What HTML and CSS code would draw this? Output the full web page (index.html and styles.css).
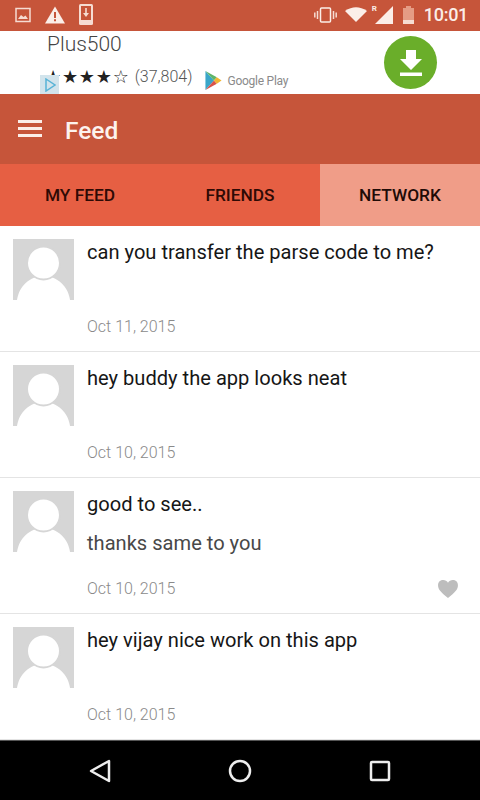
FILE: index.html
```html
<!DOCTYPE html>
<html lang="en">
<head>
    <meta charset="UTF-8">
    <title>Feed</title>
    <link rel="stylesheet" href="styles.css">
</head>
<body>

<div class="statusbar">
    <div class="status-left">
        <svg width="16" height="16" viewBox="0 0 16 16"><path d="M1 1.500h14v13H1z" fill="none" stroke="#f6dcd2" stroke-width="1.500"/><path d="M3 12l3-4 2.500 2 2-1.500 2.500 3.500z" fill="#f6dcd2"/></svg>
        <svg width="20" height="18" viewBox="0 0 20 18"><path d="M10 0.500L20 17.500H0z" fill="#fbeee8"/><path d="M9 6h2v6H9zM9 13.200h2v2H9z" fill="#c6553a"/></svg>
        <svg width="14" height="21" viewBox="0 0 14 21"><rect width="14" height="21" rx="1.500" fill="#f6dcd2"/><rect x="2" y="2" width="10" height="14" fill="#c6553a"/><path d="M6.200 4h1.600v5h2.200L7 13 4 9h2.200z" fill="#f6dcd2"/></svg>
    </div>
    <div class="status-right">
        <svg width="23" height="16" viewBox="0 0 23 16"><rect x="6.500" y="1" width="10" height="14" rx="1" fill="none" stroke="#fbeee8" stroke-width="1.500"/><path d="M3.500 4v8M0.800 5.500v5M19.500 4v8M22.200 5.500v5" stroke="#f6dcd2" stroke-width="1.500"/></svg>
        <svg class="wifi" width="22" height="15" viewBox="0 0 22 15"><path d="M0 4Q11-3.500 22 4L11 15z" fill="#fbeee8"/></svg>
        <div class="signal">
            <span class="roaming">R</span>
            <svg width="18" height="18" viewBox="0 0 18 18"><path d="M18 0v18H0z" fill="#fbeee8"/></svg>
        </div>
        <svg class="battery" width="11" height="18" viewBox="0 0 11 18"><path d="M3 0h5v2h3v16H0V2h3z" fill="#e59c85"/><path d="M0 14h11v4H0z" fill="#f6dcd2"/></svg>
        <span class="clock">10:01</span>
    </div>
</div>

<div class="ad">
    <div class="ad-info">
        <div class="ad-title">Plus500</div>
        <div class="ad-meta">
            <span class="stars">★★★★☆</span>
            <span class="ad-count">(37,804)</span>
            <svg class="play" width="17" height="19" viewBox="0 0 17 20"><path d="M0 0l9 10-9 10z" fill="#3aa6c9"/><path d="M0 0l12 6.500-3 3.500z" fill="#5fb56a"/><path d="M0 20l12-6.500-3-3.500z" fill="#d9534a"/><path d="M12 6.500l5 3.500-5 3.500-3-3.500z" fill="#f2b632"/></svg>
            <span class="store">Google Play</span>
        </div>
    </div>
    <div class="ad-badge">
        <svg width="12" height="14" viewBox="0 0 12 14"><path d="M2 1l9 6-9 6z" fill="none" stroke="#58b3d6" stroke-width="1.500"/></svg>
    </div>
    <div class="ad-button">
        <svg width="22" height="26" viewBox="0 0 22 26"><path d="M6 0h10v9h6L11 20 0 9h6z" fill="#fff"/><path d="M0 22.500h22v3.500H0z" fill="#fff"/></svg>
    </div>
</div>

<div class="toolbar">
    <div class="menu-icon"><span></span><span></span><span></span></div>
    <h1>Feed</h1>
</div>

<div class="tabs">
    <div class="tab">MY FEED</div>
    <div class="tab">FRIENDS</div>
    <div class="tab active">NETWORK</div>
</div>

<div class="feed">
    <div class="post">
        <svg class="avatar" viewBox="0 0 61 61"><rect width="61" height="61" fill="#d6d6d6"/><path d="M4 61C6 47 17 37 30.500 37S55 47 57 61z" fill="#fff"/><circle cx="30.500" cy="24" r="16.500" fill="#fff" stroke="#d6d6d6" stroke-width="2"/></svg>
        <div class="post-body">
            <p class="msg">can you transfer the parse code to me?</p>
            <div class="date">Oct 11, 2015</div>
        </div>
    </div>
    <div class="post">
        <svg class="avatar" viewBox="0 0 61 61"><rect width="61" height="61" fill="#d6d6d6"/><path d="M4 61C6 47 17 37 30.500 37S55 47 57 61z" fill="#fff"/><circle cx="30.500" cy="24" r="16.500" fill="#fff" stroke="#d6d6d6" stroke-width="2"/></svg>
        <div class="post-body">
            <p class="msg">hey buddy the app looks neat</p>
            <div class="date">Oct 10, 2015</div>
        </div>
    </div>
    <div class="post post-reply">
        <svg class="avatar" viewBox="0 0 61 61"><rect width="61" height="61" fill="#d6d6d6"/><path d="M4 61C6 47 17 37 30.500 37S55 47 57 61z" fill="#fff"/><circle cx="30.500" cy="24" r="16.500" fill="#fff" stroke="#d6d6d6" stroke-width="2"/></svg>
        <div class="post-body">
            <p class="msg">good to see..</p>
            <p class="reply">thanks same to you</p>
            <div class="date">Oct 10, 2015</div>
        </div>
        <svg class="heart" width="20" height="18" viewBox="0 0 21 19"><path d="M10.500 19C3 13 0 10 0 5.500 0 2 2.500 0 5.500 0 7.500 0 9.500 1 10.500 3 11.500 1 13.500 0 15.500 0 18.500 0 21 2 21 5.500 21 10 18 13 10.500 19z" fill="#bdbdbd"/></svg>
    </div>
    <div class="post">
        <svg class="avatar" viewBox="0 0 61 61"><rect width="61" height="61" fill="#d6d6d6"/><path d="M4 61C6 47 17 37 30.500 37S55 47 57 61z" fill="#fff"/><circle cx="30.500" cy="24" r="16.500" fill="#fff" stroke="#d6d6d6" stroke-width="2"/></svg>
        <div class="post-body">
            <p class="msg">hey vijay nice work on this app</p>
            <div class="date">Oct 10, 2015</div>
        </div>
    </div>
</div>

<div class="navbar">
    <svg width="22" height="24" viewBox="0 0 22 24"><path d="M20 2v20L2 12z" fill="none" stroke="#eee" stroke-width="2.500" stroke-linejoin="round"/></svg>
    <svg width="24" height="24" viewBox="0 0 24 24"><circle cx="12" cy="12" r="10" fill="none" stroke="#eee" stroke-width="2.500"/></svg>
    <svg width="22" height="22" viewBox="0 0 22 22"><rect x="2" y="2" width="18" height="18" rx="1" fill="none" stroke="#eee" stroke-width="2.500"/></svg>
</div>

</body>
</html>
```

FILE: styles.css
```css
* {
    box-sizing: border-box;
}

body {
    margin: 0;
    width: 480px;
    height: 800px;
    overflow: hidden;
    display: flex;
    flex-direction: column;
    font-family: 'Roboto', sans-serif;
    background-color: #fff;
}

.statusbar {
    height: 31px;
    flex: none;
    display: flex;
    justify-content: space-between;
    align-items: center;
    padding: 0 12px 2px 15px;
    background-color: #c6553a;
}

.status-left {
    display: flex;
    align-items: center;
    gap: 14px;
}

.status-right {
    display: flex;
    align-items: center;
}

.wifi {
    margin-left: 8px;
}

.signal {
    display: flex;
    align-items: flex-end;
    position: relative;
    margin-left: 8px;
}

.roaming {
    position: absolute;
    left: -3px;
    top: -2px;
    font-size: 8px;
    font-weight: 700;
    color: #fbeee8;
}

.battery {
    margin-left: 10px;
}

.clock {
    margin-left: 10px;
    font-size: 18px;
    font-weight: 500;
    letter-spacing: -0.300px;
    color: #fbeee8;
}

.ad {
    height: 63px;
    flex: none;
    display: flex;
    justify-content: space-between;
    padding: 0 43px 0 47px;
    position: relative;
    background-color: #fff;
}

.ad-title {
    font-size: 21px;
    font-weight: 300;
    line-height: 26px;
    color: #444;
}

.ad-meta {
    display: flex;
    align-items: center;
    margin-top: 6px;
    color: #777;
}

.stars {
    font-size: 18px;
    line-height: 20px;
    letter-spacing: 0.800px;
    margin-left: -2px;
    color: #222;
    font-family: 'DejaVu Sans', sans-serif;
}

.ad-count {
    margin-left: 5px;
    font-size: 16px;
    font-weight: 300;
    color: #555;
}

.play {
    margin: 8px 0 0 13px;
}

.store {
    margin: 8px 0 0 5px;
    font-size: 12px;
    letter-spacing: -0.250px;
    color: #8a8a8a;
}

.ad-badge {
    position: absolute;
    left: 40px;
    bottom: 0;
    width: 19px;
    height: 19px;
    display: flex;
    align-items: center;
    justify-content: center;
    background-color: #d2e4ec;
}

.ad-button {
    width: 53px;
    height: 53px;
    margin-top: 5px;
    display: flex;
    align-items: center;
    justify-content: center;
    border-radius: 50%;
    background-color: #6aae2a;
}

.toolbar {
    height: 70px;
    flex: none;
    display: flex;
    align-items: center;
    padding: 3px 18px 0;
    background-color: #c6553a;
}

.menu-icon {
    width: 24px;
    display: flex;
    flex-direction: column;
    gap: 4px;
    margin-bottom: 5px;
}

.menu-icon span {
    height: 3px;
    background-color: #fbeee8;
}

.toolbar h1 {
    margin: 0 0 0 23px;
    font-size: 24.500px;
    font-weight: 500;
    color: #fdf3ee;
}

.tabs {
    height: 62px;
    flex: none;
    display: flex;
    background-color: #e65f43;
}

.tab {
    width: 160px;
    display: flex;
    align-items: center;
    justify-content: center;
    font-size: 17.300px;
    font-weight: 500;
    color: #2e0a05;
}

.tab.active {
    background-color: #f09d88;
    color: #200b07;
}

.feed {
    flex: 1;
    overflow: hidden;
}

.post {
    height: 126px;
    display: flex;
    gap: 13px;
    padding: 13px 13px 0;
    border-bottom: 1px solid #e4e4e4;
    position: relative;
}

.post-reply {
    height: 136px;
}

.avatar {
    width: 61px;
    height: 61px;
    flex: none;
}

.post-body {
    flex: 1;
    display: flex;
    flex-direction: column;
}

.msg, .reply {
    margin: 0;
    font-size: 20.100px;
    line-height: 26px;
    color: #161616;
}

.reply {
    margin-top: 13px;
    color: #484848;
}

.date {
    margin-top: auto;
    margin-bottom: 14px;
    font-size: 16px;
    font-weight: 300;
    line-height: 20px;
    color: #8a8a8a;
}

.heart {
    position: absolute;
    right: 22px;
    bottom: 15px;
}

.navbar {
    height: 60px;
    flex: none;
    display: grid;
    grid-template-columns: repeat(3, 140px);
    justify-items: center;
    align-items: center;
    padding: 0 30px;
    background-color: #000;
    border-top: 1px solid #555;
}
```
